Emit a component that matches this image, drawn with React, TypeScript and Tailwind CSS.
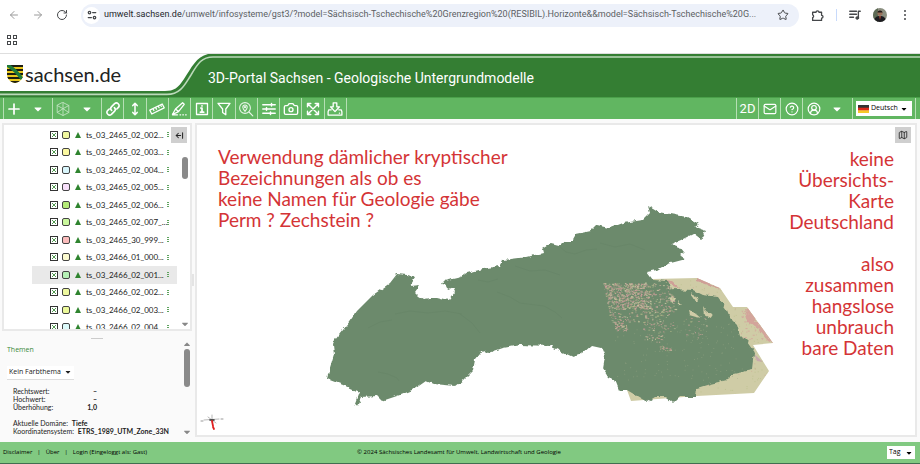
import type { ReactNode } from "react";
import { ArrowLeft, ArrowRight, RotateCw, Star, Mail, Camera, Map, CircleHelp, CircleUserRound } from "lucide-react";
import { FaCaretDown, FaCaretUp } from "react-icons/fa";

const layers = [
  { name: "ts_03_2465_02_002...", color: "bg-[#f0f79f]" },
  { name: "ts_03_2465_02_003...", color: "bg-[#fbf8a0]" },
  { name: "ts_03_2465_02_004...", color: "bg-[#d9f6fc]" },
  { name: "ts_03_2465_02_005...", color: "bg-[#f8e0fb]" },
  { name: "ts_03_2465_02_006...", color: "bg-[#b5ec78]" },
  { name: "ts_03_2465_02_007_...", color: "bg-[#c9f79c]" },
  { name: "ts_03_2465_30_999...", color: "bg-[#fbbcbc]" },
  { name: "ts_03_2466_01_000...", color: "bg-[#fcfbd0]" },
  { name: "ts_03_2466_02_001...", color: "bg-[#b5f0b5]", selected: true },
  { name: "ts_03_2466_02_002...", color: "bg-[#eef99f]" },
  { name: "ts_03_2466_02_003...", color: "bg-[#ecf99a]" },
  { name: "ts_03_2466_02_004...", color: "bg-[#dcfafa]" },
];

// Small seeded generator so the speckles stay the same on every render
function specks(count: number, x: number, y: number, w: number, h: number, seed: number) {
  let s = seed;
  const next = () => {
    s = (s * 16807) % 2147483647;
    return s / 2147483647;
  };
  return Array.from({ length: count }, () => ({
    x: x + next() * w,
    y: y + next() * h,
    w: 0.5 + next() * 1.6,
    h: 0.5 + next() * 0.8,
    c: ["#c99a95", "#cfcba6", "#c4a99a", "#d3a0a0", "#b4b98a"][Math.floor(next() * 5)],
  }));
}

const speckGroups = [
  ...specks(620, 603, 283, 44, 26, 11),
  ...specks(120, 645, 282, 26, 30, 23),
  ...specks(100, 634, 306, 32, 26, 37),
  ...specks(60, 603, 310, 28, 12, 41),
  ...specks(60, 606, 322, 12, 9, 43),
  ...specks(22, 646, 346, 12, 5, 53),
  ...specks(22, 633, 332, 20, 10, 59),
  ...specks(24, 676, 318, 22, 20, 67),
];
const faintSpecks = specks(150, 615, 320, 130, 60, 71);
const sandSpecks = specks(260, 652, 280, 118, 116, 83);
const pinkSpecks = specks(130, 741, 309, 28, 32, 97);

const GREEN_AREA =
  "M327 379 L329 371 L334 354 L333 345 L335 340 L347 325 L357 311 L373 295 L390 283 L397 274 L407 275 L415 278 L410 286 L419 285 L414 292 L418 296 L423 299 L437 297 L449 300 L455 292 L453 288 L448 290 L446 286 L441 285 L444 281 L461 277 L467 273 L487 268 L500 266 L503 260 L527 257 L543 253 L542 249 L550 244 L558 246 L565 241 L572 241 L576 234 L591 231 L597 225 L610 228 L623 223 L643 220 L650 213 L648 206 L658 212 L687 217 L699 224 L695 227 L706 231 L701 240 L693 234 L681 240 L671 244 L680 247 L684 252 L680 255 L686 259 L667 264 L657 270 L647 272 L653 280 L668 281 L672 289 L693 290 L703 295 L718 297 L727 310 L730 318 L737 325 L740 335 L747 342 L755 353 L753 370 L733 374 L727 380 L710 384 L697 388 L696 397 L680 397 L673 404 L665 397 L655 397 L647 402 L637 396 L627 390 L619 390 L615 380 L608 377 L603 369 L605 357 L601 347 L592 345 L582 354 L573 357 L560 351 L550 346 L520 345 L503 348 L488 353 L483 350 L475 360 L473 370 L463 380 L455 386 L433 384 L426 381 L413 390 L400 395 L382 401 L377 396 L362 397 L357 407 L355 403 L359 392 L343 385 Z";

function GeoModel() {
  return (
    <svg viewBox="197 125 718 310" className="h-full w-full" role="img" aria-label="Geologisches Modell">
      <defs>
        <filter id="coast" x="-5%" y="-5%" width="110%" height="110%">
          <feTurbulence type="fractalNoise" baseFrequency="0.16" numOctaves="2" seed="4" />
          <feDisplacementMap in="SourceGraphic" scale="5" xChannelSelector="R" yChannelSelector="G" />
        </filter>
        <clipPath id="sand">
          <path d="M652 279 L697 278 L720 288 L733 307 L747 307 L773 343 L753 345 L769 371 L754 393 L697 396 L631 401 L627 390 Z" />
        </clipPath>
      </defs>
      <g clipPath="url(#sand)">
        <rect x="620" y="270" width="160" height="135" fill="#cfcca6" />
        <path d="M697 277 L722 289 L717 288 L697 281 Z M666 280 L671 281 L680 289 L673 286 Z" fill="#cf9f97" filter="url(#coast)" />
        <path d="M744 308 L749 309 L775 344 L767 340 L757 328 L748 322 Z" fill="#d3a59b" filter="url(#coast)" />
        <path d="M754 354 L763 362 L757 361 Z" fill="#c8a9ac" />
        {sandSpecks.map((p, i) => (
          <rect key={i} x={p.x} y={p.y} width="1" height="1" fill={i % 4 ? "#b9c088" : "#cfa593"} opacity="0.6" />
        ))}
        {pinkSpecks.map((p, i) => (
          <rect key={i} x={p.x} y={p.y} width={p.w} height="1" fill={i % 2 ? "#cfcca6" : "#d3a59b"} opacity="0.8" />
        ))}
      </g>
      <path d={GREEN_AREA} fill="#6c8a6c" filter="url(#coast)" />
      <g fill="none" stroke="#627f63" strokeWidth="0.7" opacity="0.5">
        <path d="M378 372 L388 374 L397 378 L399 381" />
        <path d="M395 314 L410 311 L428 313 L445 311 L462 314" />
        <path d="M368 328 L380 322 L392 320" />
        <path d="M460 314 L472 323 L480 333" />
        <path d="M497 292 L510 297 L520 303 L544 306 L555 312 L562 318" />
        <path d="M560 247 L566 252 L575 254 L586 250 L597 249" />
        <path d="M515 266 L530 271 L545 270 L560 275" />
        <path d="M600 243 L615 247 L630 244 L645 250" />
        <path d="M478 280 L488 282 L498 279" />
      </g>
      <g fill="#cfcba6" filter="url(#coast)">
        <path d="M669 298 l5 -2 l2 4 l-4 2 z" />
        <path d="M690 293 l5 2 l4 6 l-4 0 l-2 -4 z" />
        <path d="M688 311 l8 2 l6 5 l-6 -1 l-7 -2 z" />
        <path d="M703 307 l3 5 l7 4 l-3 2 l-6 -3 z" />
        <path d="M677 300 l5 5 l-4 -1 z" />
      </g>
      {speckGroups.map((p, i) => (
        <rect key={i} x={p.x + (p.y - 283) * 0.2} y={p.y} width={p.w} height={p.h} fill={p.c} opacity="0.8" />
      ))}
      {faintSpecks.map((p, i) => (
        <rect key={i} x={p.x} y={p.y} width="0.8" height="0.8" fill="#a3ad8c" opacity="0.6" />
      ))}
      {/* Axis cross in the lower left corner */}
      <g strokeLinecap="round">
        <path d="M204 420 L219 419 M208 417 L216 423 M212 415 V422" stroke="#888" strokeWidth="0.6" />
        <path d="M201 421 h2 M221 419 h2" stroke="#999" strokeWidth="1" />
        <path d="M210 420 h4" stroke="#333" strokeWidth="1.6" />
        <path d="M212 421 L213 426 M213 427 L214 429" stroke="#e02020" strokeWidth="1.8" />
      </g>
    </svg>
  );
}

function Glyph({ children, className = "h-4 w-4" }: { children: ReactNode; className?: string }) {
  return (
    <svg viewBox="0 0 16 16" className={className} fill="none" stroke="currentColor" strokeWidth="1.3" strokeLinecap="round" strokeLinejoin="round" aria-hidden="true">
      {children}
    </svg>
  );
}

const tools = [
  {
    label: "Link",
    icon: (
      <Glyph>
        <path d="M6.6 9.4a2.7 2.7 0 0 1 0-3.8l3-3a2.7 2.7 0 0 1 3.8 3.8l-1.6 1.6M9.4 6.6a2.7 2.7 0 0 1 0 3.8l-3 3a2.7 2.7 0 0 1-3.8-3.8l1.6-1.6" strokeWidth="1.6" />
      </Glyph>
    ),
  },
  { label: "Überhöhung", icon: <Glyph><path d="M8 2.5v11M5.8 4.6 8 2.2l2.2 2.4M5.8 11.4 8 13.8l2.2-2.4" strokeWidth="1.5" /></Glyph> },
  {
    label: "Messen",
    icon: (
      <Glyph>
        <path d="M.8 9.2 13.2 3l2 3.8L2.8 13z M4 7.8l.9 1.7M6.6 6.4l.9 1.7M9.2 5.1l.9 1.7M11.6 3.9l.7 1.4" />
      </Glyph>
    ),
  },
  {
    label: "Zeichnen",
    icon: (
      <Glyph>
        <path d="M1.5 13.5 4.5 8 11.6 1.8l1.6 1.5L7.5 10.6z M4.5 8l3 2.6M1.5 13.8h5" />
        <path d="M9 13.8h.6M11.8 13.8h.6M14.6 13.8h.6" />
      </Glyph>
    ),
  },
  { label: "Information", icon: <Glyph><path d="M2.5 2.5h11v11h-11z" /><path d="M6.8 7H8v4.2M6.4 11.2h3.3M8 4.8v.2" strokeWidth="1.7" /></Glyph> },
  { label: "Filter", icon: <Glyph><path d="M2 2.3h12L9.8 8v5.8L6.6 11.5V8z" /></Glyph> },
  {
    label: "Ort suchen",
    icon: (
      <Glyph>
        <g opacity=".85" strokeWidth="1.1">
          <circle cx="7" cy="7" r="5.4" />
          <path d="m11 11 3.8 3.8M7 10.3C5.4 8.3 4.8 7.3 4.8 6.2a2.2 2.2 0 0 1 4.4 0c0 1.1-.6 2.1-2.2 4.1z" />
          <circle cx="7" cy="6.2" r=".6" />
        </g>
      </Glyph>
    ),
  },
  {
    label: "Einstellungen",
    icon: <Glyph><path d="M1.8 3.8h12.4M1.8 8h12.4M1.8 12.2h12.4M10.5 2.5v2.6M5.5 6.7v2.6M9.5 10.9v2.6" strokeWidth="1.5" /></Glyph>,
  },
  { label: "Bildschirmfoto", icon: <Camera className="h-4 w-4" strokeWidth={2} /> },
  {
    label: "Vollbild",
    icon: (
      <Glyph>
        <path d="M2.5 5.8V2.5h3.3M10.2 2.5h3.3v3.3M13.5 10.2v3.3h-3.3M5.8 13.5H2.5v-3.3M3 3l10 10M13 3 3 13" strokeWidth="1.4" />
      </Glyph>
    ),
  },
  {
    label: "Herunterladen",
    icon: (
      <Glyph>
        <path d="M6.2 1.8h3.6v4h2.7L8 10.6 3.5 5.8h2.7zM4.2 8.8H1.8l-.7 2v3.3h13.8v-3.3l-.7-2h-2.4M12.4 12.2h.2" />
      </Glyph>
    ),
  },
];

const cell = "flex h-full items-center border-l border-[#b6dfb4] text-white";

function BrowserBar() {
  return (
    <div className="border-b border-[#dedede] bg-white text-[#45474a]">
      <div className="flex h-[30px] items-center pr-[9px] pl-2">
        <button aria-label="Zurück" className="text-[#9a9a9a]">
          <ArrowLeft className="h-3 w-3" />
        </button>
        <button aria-label="Vorwärts" className="ml-3 text-[#9a9a9a]">
          <ArrowRight className="h-3 w-3" />
        </button>
        <button aria-label="Neu laden" className="ml-3">
          <RotateCw className="h-3 w-3" />
        </button>
        <div className="ml-[13px] flex h-[23px] min-w-0 flex-1 items-center rounded-full bg-[#edf1fa] pr-[10px] pl-[2px]">
          <span className="flex h-[17px] w-[17px] shrink-0 items-center justify-center rounded-full bg-white">
            <Glyph className="h-[10px] w-[10px]">
              <path d="M9 4h5M2 12h5" strokeWidth="2" />
              <circle cx="4" cy="4" r="2" strokeWidth="2" />
              <circle cx="12" cy="12" r="2" strokeWidth="2" />
            </Glyph>
          </span>
          <div className="ml-1 min-w-0 flex-1 font-['Roboto',sans-serif] text-[9px] whitespace-nowrap text-[#5c5f63]">
            <span className="text-[#25272a]">umwelt.sachsen.de</span>
            /umwelt/infosysteme/gst3/?model=Sächsisch-Tschechische%20Grenzregion%20(RESIBIL).Horizonte&amp;&amp;model=Sächsisch-Tschechische%20G...
          </div>
          <button aria-label="Lesezeichen" className="ml-1">
            <Star className="h-3 w-3" />
          </button>
        </div>
        <button aria-label="Erweiterungen" className="ml-3">
          <Glyph className="h-[13px] w-[13px]">
            <path d="M2 4h4.2a1.8 1.8 0 0 1 3.6 0H13v3.8a1.8 1.8 0 0 1 0 3.6V14H2v-3.4a1.8 1.8 0 0 0 0-3.4z" strokeWidth="1.6" />
          </Glyph>
        </button>
        <span className="mx-3 h-3 w-px bg-[#c8dafb]" />
        <button aria-label="Medien" className="mr-3">
          <Glyph className="h-3 w-3">
            <path d="M1 3h9M1 7h9M1 11h5M12.5 12V3H15" strokeWidth="1.8" />
            <circle cx="11" cy="12" r="1.8" fill="currentColor" />
          </Glyph>
        </button>
        <button aria-label="Profil" className="h-[14px] w-[14px] overflow-hidden rounded-full">
          <svg viewBox="0 0 14 14" className="h-full w-full">
            <rect width="14" height="14" fill="#8b8f80" />
            <path d="M0 0h5v14H0z" fill="#5d6a55" />
            <path d="M1 14c0-5 3-6 6-6s6 1 6 6z" fill="#1c1c20" />
            <circle cx="7" cy="5" r="2.6" fill="#99705a" />
            <path d="M4.3 4.5a2.8 2.8 0 0 1 5.4 0z" fill="#201a18" />
            <path d="m6 8 1 4 1-4z" fill="#a34434" />
          </svg>
        </button>
        <button aria-label="Menü" className="ml-3 flex w-3 flex-col items-center gap-[2px]">
          <span className="h-[2px] w-[2px] rounded-full bg-current" />
          <span className="h-[2px] w-[2px] rounded-full bg-current" />
          <span className="h-[2px] w-[2px] rounded-full bg-current" />
        </button>
      </div>
      <div className="flex h-[23px] items-start pl-[7px]">
        <button aria-label="Apps" className="mt-[5px] grid grid-cols-2 gap-[2px]">
          <span className="h-1 w-1 border border-current" />
          <span className="h-1 w-1 border border-current" />
          <span className="h-1 w-1 border border-current" />
          <span className="h-1 w-1 border border-current" />
        </button>
      </div>
    </div>
  );
}

function SiteHeader() {
  return (
    <header className="grid h-[43px] grid-cols-1 overflow-hidden bg-[#347e33]">
      <svg className="col-start-1 row-start-1 h-[43px] w-full" aria-hidden="true">
        <path d="M0 0 H208 C196 3 192 13 184 25 C178 34 174 37 165 37 H0 Z" fill="#fff" />
        <path d="M0 40.4 H167 C181 40.4 185 30 191 21 C198 9 202 3 213 3 H6000" fill="none" stroke="#bcd9ba" strokeWidth="1.6" />
      </svg>
      <div className="col-start-1 row-start-1 flex items-center">
        <a href="#" className="flex w-[208px] items-center gap-[2px] pb-1 pl-[7px] font-['Lato',sans-serif] text-[20px] leading-6 text-[#222]">
          <svg viewBox="0 0 16 18" className="h-[18px] w-4" aria-hidden="true">
            <clipPath id="shield">
              <path d="M0 0h16v9c0 5-3 8-8 9-5-1-8-4-8-9z" />
            </clipPath>
            <g clipPath="url(#shield)">
              <rect width="16" height="18" fill="#e9c81d" />
              <path d="M0 1h16M0 5h16M0 9h16M0 13h16M0 17h16" stroke="#1d1d12" strokeWidth="2" />
              <path d="M0 0 C6 3 11 8 16 15" stroke="#1f7a3a" strokeWidth="3.4" fill="none" />
            </g>
          </svg>
          sachsen.de
        </a>
        <h1 className="pt-[5px] font-['Roboto',sans-serif] text-[14px] text-white">3D-Portal Sachsen - Geologische Untergrundmodelle</h1>
      </div>
    </header>
  );
}

function Toolbar() {
  return (
    <nav className="flex h-[22px] items-center justify-between border-t border-[#4aa04a] bg-[#61b661]">
      <div className="flex h-full pl-[3px]">
        <button aria-label="Hinzufügen" className={`${cell} w-[49px] gap-[10px] pl-[2px]`}>
          <Glyph className="h-4 w-4"><path d="M8 3v10M3 8h10" strokeWidth="1.7" /></Glyph>
          <FaCaretDown className="h-3 w-3" />
        </button>
        <button aria-label="Ansicht" className={`${cell} w-[49px] gap-[10px] pl-[2px]`}>
          <Glyph className="h-4 w-4 opacity-60">
            <path d="M8 1.5 13.8 4.5v7L8 14.5 2.2 11.5v-7zM2.2 4.5 8 7.7l5.8-3.2M8 7.7v6.8M8 1.5v6.2M2.2 11.5 8 7.7l5.8 3.8" strokeWidth=".9" />
          </Glyph>
          <FaCaretDown className="h-3 w-3" />
        </button>
        <div className="grid w-[246px] grid-cols-11 border-r border-[#b6dfb4]">
          {tools.map((tool) => (
            <button key={tool.label} aria-label={tool.label} className={`${cell} justify-center`}>
              {tool.icon}
            </button>
          ))}
        </div>
      </div>
      <div className="flex h-full pr-1">
        <button className={`${cell} w-[22px] justify-center font-['Roboto',sans-serif] text-[13px]`}>2D</button>
        <button aria-label="Nachricht" className={`${cell} w-[22px] justify-center`}><Mail className="h-[14px] w-[14px]" /></button>
        <button aria-label="Hilfe" className={`${cell} w-[22px] justify-center`}><CircleHelp className="h-[14px] w-[14px]" /></button>
        <button aria-label="Benutzer" className={`${cell} w-[50px] gap-[10px] pl-1`}>
          <CircleUserRound className="h-[14px] w-[14px]" />
          <FaCaretDown className="h-3 w-3" />
        </button>
        <div className={`${cell} w-[64px] justify-center border-r`}>
          <label className="flex h-[15px] w-[56px] items-center bg-white pr-1 pl-[2px] text-black">
            <svg viewBox="0 0 11 8" className="h-2 w-[11px] shrink-0" aria-hidden="true">
              <path d="M0 0h11v3H0z" fill="#333" />
              <path d="M0 2.7h11v3H0z" fill="#dd2a1b" />
              <path d="M0 5.4h11V8H0z" fill="#f6c928" />
            </svg>
            <select aria-label="Sprache" className="min-w-0 flex-1 appearance-none pl-[2px] text-[7px] outline-none">
              <option>Deutsch</option>
            </select>
            <FaCaretDown className="h-2 w-2 shrink-0" />
          </label>
        </div>
      </div>
    </nav>
  );
}

function LayerTree() {
  return (
    <div className="relative h-[208px] overflow-hidden border-2 border-[#e9e9e9] bg-white">
      <ul className="mt-px grid h-[210px] pr-[13px] pl-7 font-['Lato',sans-serif] text-[8px]">
        {layers.map((layer) => (
          <li key={layer.name} className={`flex items-center pr-1 pl-[18px] ${layer.selected ? "bg-[#e9e9e9]" : ""}`}>
            <label className="grid h-2 w-2 shrink-0 place-items-center">
              <input type="checkbox" defaultChecked aria-label={layer.name} className="col-start-1 row-start-1 h-2 w-2 appearance-none border border-[#333] bg-white" />
              <svg viewBox="0 0 4 4" className="pointer-events-none col-start-1 row-start-1 h-1 w-1" aria-hidden="true">
                <path d="M0 0 4 4M4 0 0 4" stroke="#3c8f3c" strokeWidth="0.9" />
              </svg>
            </label>
            <button aria-label="Farbe" className={`ml-1 h-2 w-2 shrink-0 rounded-[2px] border border-[#444] ${layer.color}`} />
            <svg viewBox="0 0 6 6" className="ml-[5px] h-[6px] w-[6px] shrink-0" aria-hidden="true">
              <path d="M3 0 6 6H0z" fill="#2f842f" />
            </svg>
            <span className="ml-[5px] w-[77px] whitespace-nowrap text-[#222]">{layer.name}</span>
            <button aria-label="Optionen" className="flex w-[10px] shrink-0 flex-col items-center gap-px">
              <span className="h-px w-[2px] bg-[#5fa35f]" />
              <span className="h-px w-[2px] bg-[#5fa35f]" />
              <span className="h-px w-[2px] bg-[#5fa35f]" />
            </button>
          </li>
        ))}
      </ul>
      <div className="absolute top-8 right-[2px] h-[22px] w-[6px] rounded-full bg-[#8a8a8a]" />
      <FaCaretDown className="absolute right-[1px] bottom-0 h-[10px] w-[8px] text-[#888]" />
      <button aria-label="Einklappen" className="absolute top-[2px] right-[3px] flex h-4 w-4 items-center justify-center bg-[#cfcfcf]">
        <Glyph className="h-[9px] w-[9px]"><path d="M2 8h8M6 4 2 8l4 4M13.5 3v10" strokeWidth="1.8" /></Glyph>
      </button>
    </div>
  );
}

function ThemePanel() {
  return (
    <div className="flex flex-1 justify-between pl-[5px]">
      <div>
        <h2 className="pt-[6px] text-[#3b8a3b]">Themen</h2>
        <label className="mt-[10px] flex h-[14px] w-[67px] items-center border-b border-[#ddd] bg-white pr-[2px] pl-[2px]">
          <select aria-label="Farbthema" className="min-w-0 flex-1 appearance-none outline-none">
            <option>Kein Farbthema</option>
          </select>
          <FaCaretDown className="h-2 w-2 shrink-0" />
        </label>
        <dl className="mt-[7px] ml-[6px] grid w-[84px] grid-cols-[1fr_auto] font-['Lato',sans-serif] leading-2">
          <dt>Rechtswert:</dt>
          <dd className="text-right font-bold">–</dd>
          <dt>Hochwert:</dt>
          <dd className="text-right font-bold">–</dd>
          <dt>Überhöhung:</dt>
          <dd className="text-right font-bold">1,0</dd>
        </dl>
        <div className="mt-2 ml-[6px] font-['Lato',sans-serif] leading-2 whitespace-nowrap">
          <p>Aktuelle Domäne: <b className="ml-[2px] font-bold">Tiefe</b></p>
          <p>Koordinatensystem: <b className="ml-[2px] font-bold">ETRS_1989_UTM_Zone_33N</b></p>
        </div>
      </div>
      <div className="flex w-[11px] flex-col items-center text-[#888]">
        <FaCaretUp className="h-[10px] w-[8px] shrink-0" />
        <div className="h-[38px] w-[6px] rounded-full bg-[#8a8a8a]" />
        <FaCaretDown className="mt-auto h-[10px] w-[8px] shrink-0" />
      </div>
    </div>
  );
}

export default function App() {
  return (
    <div className="flex min-h-screen flex-col bg-[#fafafa] font-['Open_Sans',sans-serif] text-[7px] text-[#222]">
      <BrowserBar />
      <SiteHeader />
      <Toolbar />
      <main className="flex flex-1 pt-1 pr-[3px] pb-[5px] pl-[2px]">
        <aside className="flex w-[190px] shrink-0 flex-col">
          <LayerTree />
          <div className="mx-auto mt-[7px] h-px w-3 bg-[#ccc]" />
          <ThemePanel />
        </aside>
        <div className="flex w-[3px] items-center">
          <div className="h-3 w-[2px] bg-[#e4e4e4]" />
        </div>
        <section className="grid min-w-0 flex-1 grid-cols-1 grid-rows-1 border-2 border-[#e9e9e9] bg-white">
          <div className="col-start-1 row-start-1">
            <GeoModel />
          </div>
          <div className="z-10 col-start-1 row-start-1 flex justify-between pr-1 pl-[21px] font-['Lato',sans-serif] text-[19px] leading-[21px] text-[#d43436]">
            <p className="pt-[21px]">
              Verwendung dämlicher kryptischer
              <br />
              Bezeichnungen als ob es
              <br />
              keine Namen für Geologie gäbe
              <br />
              Perm ? Zechstein ?
            </p>
            <div className="flex gap-px">
              <div className="flex flex-col gap-[21px] pt-[23px] text-right">
                <p>
                  keine
                  <br />
                  Übersichts-
                  <br />
                  Karte
                  <br />
                  Deutschland
                </p>
                <p>
                  also
                  <br />
                  zusammen
                  <br />
                  hangslose
                  <br />
                  unbrauch
                  <br />
                  bare Daten
                </p>
              </div>
              <button aria-label="Übersichtskarte" className="mt-[2px] flex h-4 w-4 items-center justify-center bg-[#cfcfcf] text-[#222]">
                <Map className="h-[10px] w-[10px]" />
              </button>
            </div>
          </div>
        </section>
      </main>
      <footer className="grid h-[22px] grid-cols-[1fr_auto_1fr] items-center border-b border-[#3f6f50] bg-[#81c981] pr-[5px] pl-[3px] text-[6px] text-black">
        <div className="flex gap-[5px]">
          <a href="#">Disclaimer</a>
          <span>|</span>
          <a href="#">Über</a>
          <span>|</span>
          <a href="#">Login (Eingeloggt als: Gast)</a>
        </div>
        <p>© 2024 Sächsisches Landesamt für Umwelt, Landwirtschaft und Geologie</p>
        <label className="flex h-[13px] w-[28px] items-center justify-self-end bg-white pr-[2px] pl-[2px]">
          <select aria-label="Darstellung" className="min-w-0 flex-1 appearance-none text-[7px] outline-none">
            <option>Tag</option>
          </select>
          <FaCaretDown className="h-2 w-2 shrink-0" />
        </label>
      </footer>
    </div>
  );
}
